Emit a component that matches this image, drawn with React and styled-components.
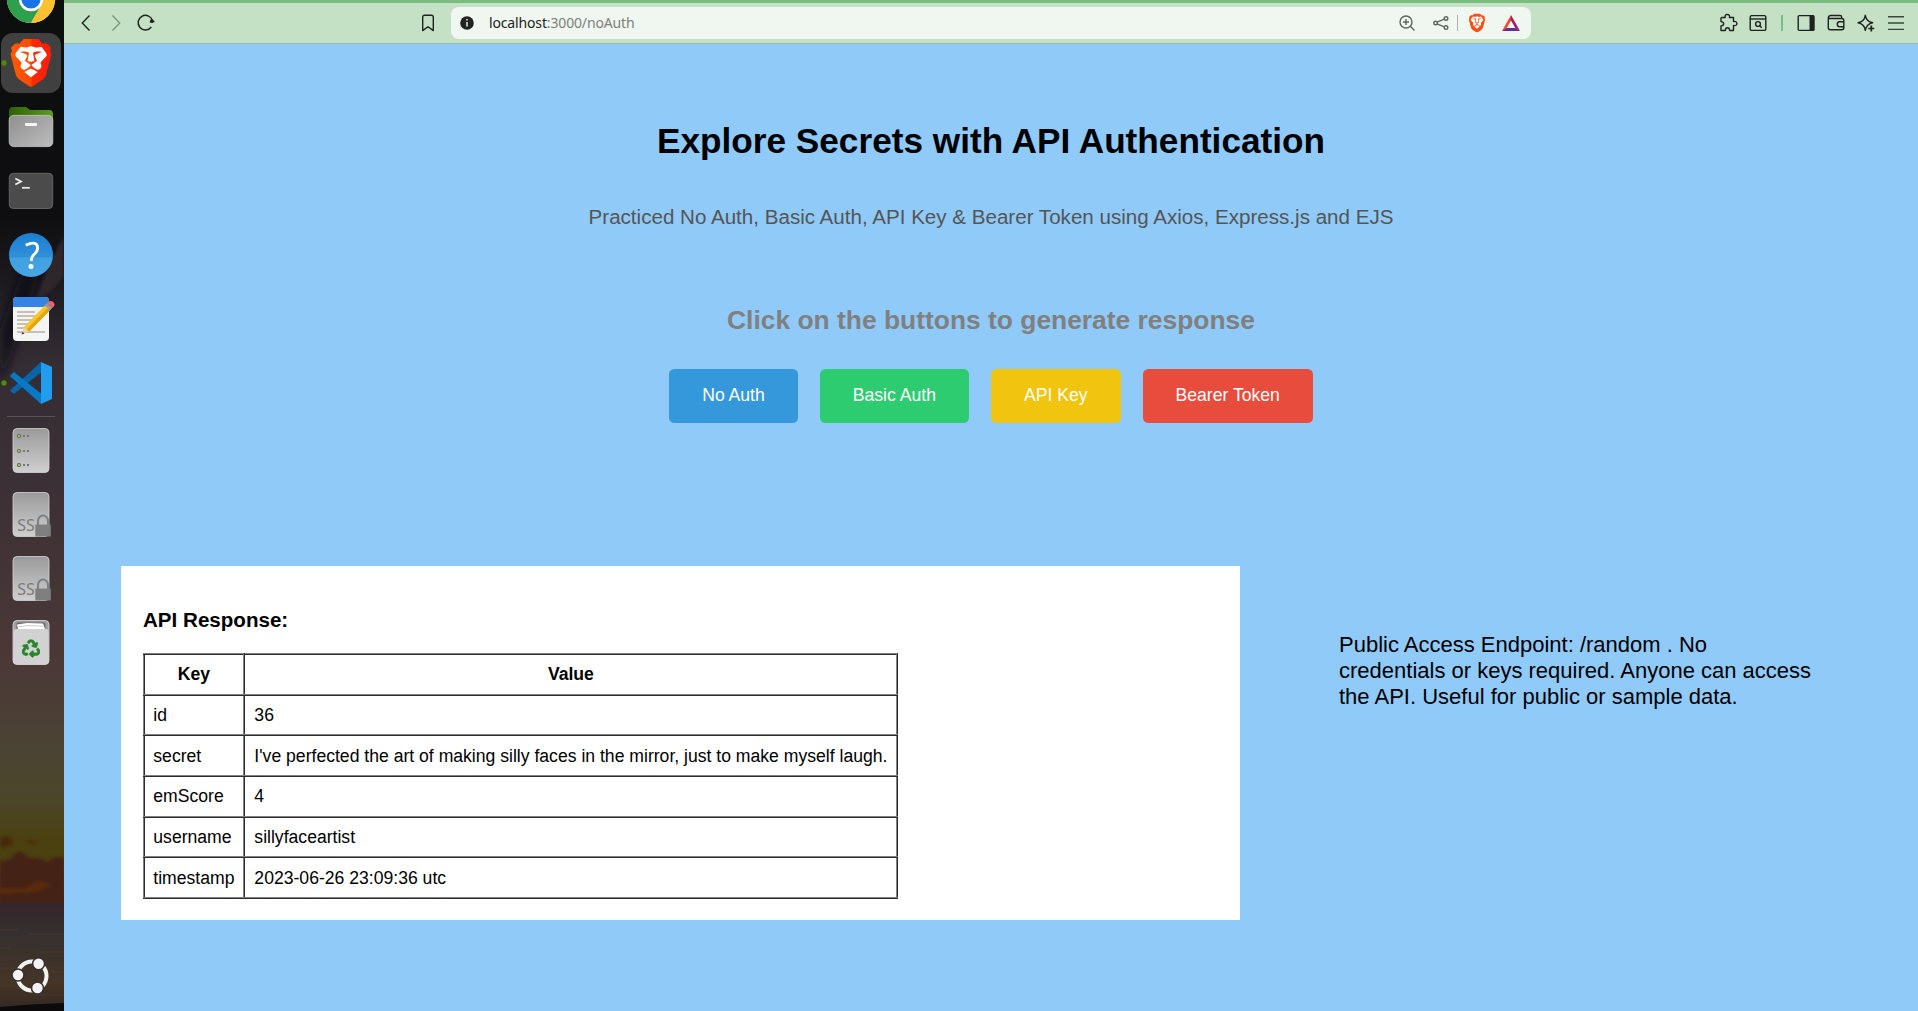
import React from "react";
import styled, { createGlobalStyle } from "styled-components";
import { SiBrave } from "react-icons/si";
import { FaRecycle } from "react-icons/fa";

const GlobalStyle = createGlobalStyle`
  * { box-sizing: border-box; }
  body {
    margin: 0;
    overflow: hidden;
    font-family: "Liberation Sans", Arial, sans-serif;
    font-size: 17.6px;
    color: #000;
  }
`;

const Desktop = styled.div`
  display: flex;
  width: 1918px;
  height: 1011px;
  overflow: hidden;
`;

/* ---------- dock ---------- */

const DockBar = styled.nav`
  display: grid;
  flex: none;
  width: 64px;
  height: 1011px;
  overflow: hidden;
  > * { grid-area: 1 / 1; }
`;

const Wallpaper = styled.svg`
  display: block;
`;

const DockItems = styled.div`
  display: flex;
  flex-direction: column;
  height: 1011px;
  margin-top: -33px;
  z-index: 1;
`;

const DockSlot = styled.div`
  flex: none;
  width: 64px;
  height: 64px;
  svg { display: block; }
`;

const DockRule = styled.hr`
  flex: none;
  width: 48px;
  height: 1px;
  margin: 1px 0 1px 7px;
  border: 0;
  background: #5a5459;
`;

const LauncherSlot = styled(DockSlot)`
  margin-top: 270px;
`;

function Slot({ children }) {
  return (
    <DockSlot>
      <svg width="64" height="64" viewBox="0 0 64 64">{children}</svg>
    </DockSlot>
  );
}

function SsdIcon() {
  return (
    <Slot>
      <rect x="13" y="10.5" width="36" height="44" rx="4" fill="url(#steel)" stroke="#d6d6d6" strokeWidth=".8" />
      <text x="17.3" y="48.5" fontFamily="Noto Sans, sans-serif" fontSize="16" fill="#7b7b7b">SS</text>
      <path d="M38 44v-5a5 5.5 0 0 1 10 0v5" fill="none" stroke="#7f7f7f" strokeWidth="2" />
      <rect x="35.3" y="42.5" width="15.5" height="12" fill="#7f7f7f" />
    </Slot>
  );
}

function Dock() {
  return (
    <DockBar>
      <Wallpaper width="64" height="1011" viewBox="0 0 64 1011">
        <defs>
          <linearGradient id="sky" x1="0" y1="0" x2="0" y2="1">
            <stop offset="0" stopColor="#0d0e0e" />
            <stop offset=".21" stopColor="#0e0e10" />
            <stop offset=".27" stopColor="#1a181d" />
            <stop offset=".36" stopColor="#342d34" />
            <stop offset=".5" stopColor="#3d3136" />
            <stop offset=".66" stopColor="#4b3937" />
            <stop offset=".74" stopColor="#4b4334" />
            <stop offset=".79" stopColor="#4b462a" />
            <stop offset=".83" stopColor="#4b4110" />
            <stop offset=".855" stopColor="#4b3f10" />
            <stop offset=".9" stopColor="#452110" />
            <stop offset="1" stopColor="#452110" />
          </linearGradient>
          <linearGradient id="sea" x1="0" y1="0" x2="0" y2="1">
            <stop offset="0" stopColor="#33262c" />
            <stop offset=".3" stopColor="#36302f" />
            <stop offset=".75" stopColor="#453526" />
            <stop offset="1" stopColor="#302724" />
          </linearGradient>
          <filter id="soft"><feGaussianBlur stdDeviation="1.5" /></filter>
          <filter id="haze"><feGaussianBlur stdDeviation="5" /></filter>
        </defs>
        <rect width="64" height="1011" fill="url(#sky)" />
        <path d="M64 255L38 275L32 300L0 385V330L30 250Z" fill="#101018" filter="url(#haze)" opacity=".8" />
        <path d="M64 236L50 262L40 290L36 300L52 290L64 276Z" fill="#2d272b" filter="url(#soft)" />
        <g filter="url(#soft)">
          <path d="M0 838Q8 833 14 842Q8 849 0 847ZM26 841Q32 839 39 844L30 844Z" fill="#472910" />
          <path d="M0 861Q10 861 14 855Q20 847 29 858Q40 857 47 862Q54 855 64 858V905H0Z" fill="#452312" />
          <path d="M0 888h26l12 -7l14 4l-16 7l-36 2Z" fill="#5a2a0d" />
        </g>
        <rect y="903" width="64" height="108" fill="url(#sea)" />
        <path d="M0 930h18M28 934h36M0 948h10M40 952h24M0 968h13M50 972h14M0 986h28M34 995h30" stroke="#514030" strokeWidth="1.5" opacity=".35" />
        <path d="M0 1007Q30 1004 64 1003V1011H0Z" fill="#0c0a0b" />
      </Wallpaper>
      <DockItems>
        <Slot>
          <circle cx="31" cy="32" r="24" fill="#fff" />
          <path d="M31 32L10.2 20A24 24 0 0 0 31 56L41.4 38Z" fill="#2e9f4b" />
          <path d="M31 56A24 24 0 0 0 51.8 20H31L41.4 38Z" fill="#fdc02f" />
          <path d="M10.2 20A24 24 0 0 1 51.8 20H31Z" fill="#e33b2e" />
          <circle cx="31" cy="32" r="12.2" fill="#fff" />
          <circle cx="31" cy="32" r="9.6" fill="#1a73e8" />
        </Slot>
        <Slot>
          <defs>
            <linearGradient id="brave" x1="0" y1="0" x2="1" y2="0">
              <stop offset="0" stopColor="#ff5b00" />
              <stop offset=".5" stopColor="#ff4a00" />
              <stop offset=".52" stopColor="#ff2a00" />
              <stop offset="1" stopColor="#ff1d0a" />
            </linearGradient>
          </defs>
          <rect x="1" y="2" width="60" height="60" rx="12" fill="#404040" />
          <circle cx="4" cy="32" r="2.7" fill="#4e8a06" />
          <path d="M17 16L31 12L46 16L48 24L40 46L31 53L22 46L14 24Z" fill="#fff" />
          <SiBrave x="7" y="8" size="48" fill="url(#brave)" />
        </Slot>
        <Slot>
          <defs>
            <linearGradient id="folder" x1="0" y1="0" x2="1" y2="1">
              <stop offset="0" stopColor="#8f8f8f" />
              <stop offset="1" stopColor="#bdbdbd" />
            </linearGradient>
            <linearGradient id="leaf" x1="0" y1="0" x2="1" y2="0">
              <stop offset="0" stopColor="#2f6100" />
              <stop offset="1" stopColor="#5e9b22" />
            </linearGradient>
          </defs>
          <path d="M9 30V16a4 4 0 0 1 4-4h13l4 3h19a4 4 0 0 1 4 4v11Z" fill="url(#leaf)" />
          <rect x="9.2" y="20.4" width="43.6" height="31.2" rx="4.5" fill="url(#folder)" stroke="#c9c9c9" strokeWidth=".8" />
          <rect x="25" y="28" width="12" height="3" rx="1" fill="#f5f5f5" />
        </Slot>
        <Slot>
          <rect x="9.3" y="14.3" width="43.4" height="35.2" rx="4" fill="#4b4b4b" stroke="#636363" />
          <path d="M15.3 19.5L21 22.5L15.3 25.5" fill="none" stroke="#eee" strokeWidth="1.8" />
          <path d="M22 28.8h7.8" stroke="#eee" strokeWidth="1.7" />
        </Slot>
        <Slot>
          <defs>
            <linearGradient id="help" x1="0" y1="0" x2="0" y2="1">
              <stop offset="0" stopColor="#1b7fd1" />
              <stop offset=".55" stopColor="#2f90da" />
              <stop offset=".56" stopColor="#419fdf" />
              <stop offset="1" stopColor="#45a7e6" />
            </linearGradient>
          </defs>
          <circle cx="31" cy="32" r="22" fill="url(#help)" />
          <path d="M25.7 22.2Q37.500 17 37.600 25Q37.500 28.500 34 31.500Q31.300 33.800 31.300 38" fill="none" stroke="#fff" strokeWidth="2.9" />
          <circle cx="31" cy="43.5" r="2.5" fill="#fff" />
        </Slot>
        <Slot>
          <rect x="13" y="10" width="36" height="44" rx="4" fill="#f4f4f2" />
          <path d="M13 20v-6a4 4 0 0 1 4-4h28a4 4 0 0 1 4 4v6Z" fill="#3584e4" />
          <path d="M17 25h18M17 29h20M17 33h17M17 37h15M17 41h11M17 45h28" stroke="#c5c1b5" strokeWidth="1.8" />
          <path d="M21.5 47.5L24 40L29 44Z" fill="#eed3a8" />
          <path d="M21.5 47.5L22.5 44.7L24.5 46.5Z" fill="#333" />
          <path d="M24 40L44.7 18.5L50 23.3L29.3 44.6Z" fill="#f7c52f" />
          <path d="M26.8 42.3L47.4 21L50 23.3L29.3 44.6Z" fill="#e5a50a" />
          <path d="M44.7 18.5L47 16L52.5 20.8L50 23.3Z" fill="#9a9996" />
          <path d="M47 16Q50 12.4 53.6 15.5Q56 18 52.5 20.8Z" fill="#f06368" />
        </Slot>
        <Slot>
          <circle cx="4" cy="32" r="2.7" fill="#4e8a06" />
          <path d="M9.8 39.5L13.8 43L41 21.5V11Z" fill="#0865a9" />
          <path d="M9.8 25L13.8 21L41 42.5V53Z" fill="#0879c7" />
          <path d="M41 11L52 16V48L41 53Z" fill="#229cee" />
        </Slot>
        <DockRule />
        <Slot>
          <defs>
            <linearGradient id="steel" x1="0" y1="0" x2="0" y2="1">
              <stop offset="0" stopColor="#9a9a9a" />
              <stop offset="1" stopColor="#cfcfcf" />
            </linearGradient>
          </defs>
          <rect x="13" y="10.5" width="36" height="44" rx="4" fill="url(#steel)" stroke="#d6d6d6" strokeWidth=".8" />
          {[18, 33, 47].map((y) => (
            <g key={y}>
              <circle cx="19" cy={y} r="1.7" fill="#9fbe52" stroke="#6a7064" />
              <path d={`M23 ${y}h2M27 ${y}h2`} stroke="#777" strokeWidth="2" />
            </g>
          ))}
        </Slot>
        <SsdIcon />
        <SsdIcon />
        <Slot>
          <rect x="13" y="10.5" width="36" height="44" rx="4" fill="url(#steel)" stroke="#dedede" strokeWidth=".8" />
          <rect x="13.5" y="19" width="35" height="35" rx="3" fill="#d2d2d2" />
          <path d="M16.5 19V14q0-1.5 1.5-1.5h26q1.5 0 1.5 1.5V19Z" fill="#6d6d6d" />
          <path d="M18 19l-1-4.5l10-1.5l16 .5l2 5.5Z" fill="#fff" />
          <path d="M18 17l10-1.5l15 .7" stroke="#aaa" strokeWidth=".6" fill="none" />
          <FaRecycle x="22" y="29.5" size="18" fill="#26862b" stroke="#26862b" strokeWidth="26" />
        </Slot>
        <LauncherSlot>
          <svg width="64" height="64" viewBox="0 0 64 64">
            <circle cx="32" cy="32" r="14.5" fill="none" stroke="#f3f3f3" strokeWidth="4" />
            <g fill="#f3f3f3" stroke="#37302f" strokeWidth="1.6">
              <circle cx="18" cy="31" r="6" />
              <circle cx="38.6" cy="19.7" r="6" />
              <circle cx="37.5" cy="44" r="6" />
            </g>
          </svg>
        </LauncherSlot>
      </DockItems>
    </DockBar>
  );
}

/* ---------- browser chrome ---------- */

const Window = styled.div`
  display: flex;
  flex-direction: column;
  flex: 1;
  min-width: 0;
`;

const Toolbar = styled.header`
  display: flex;
  align-items: center;
  flex: none;
  height: 44px;
  border-top: 3px solid #7abd7e;
  border-bottom: 1px solid #96bea3;
  background: #c5e1c5;
`;

const AddressBar = styled.div`
  display: flex;
  align-items: center;
  width: 1080px;
  height: 32px;
  margin-left: 13px;
  padding: 0 10px 0 6px;
  border-radius: 8px;
  background: #f0f7f0;
`;

const Url = styled.span`
  flex: 1;
  margin-left: 12px;
  font-family: "Noto Sans", sans-serif;
  font-size: 14px;
  line-height: 20px;
  letter-spacing: -0.15px;
  color: #7c817c;
`;

const Host = styled.span`
  color: #202320;
`;

const ToolIcon = styled.svg`
  flex: none;
  width: 20px;
  height: 20px;
  margin-left: ${(p) => p.$gap}px;
  fill: none;
  stroke: ${(p) => p.$color || "#1f2320"};
  stroke-width: 1.4;
`;

const Divider = styled.i`
  width: ${(p) => p.$width}px;
  height: 16px;
  margin-left: ${(p) => p.$gap}px;
  background: ${(p) => p.$color};
`;

function BrowserBar() {
  return (
    <Toolbar>
      <ToolIcon $gap={12}><path d="M13.5 2.5L6.3 10L13.5 17.5" /></ToolIcon>
      <ToolIcon $gap={10} $color="#819481"><path d="M6.5 2.5L13.7 10L6.5 17.5" /></ToolIcon>
      <ToolIcon $gap={10}>
        <path d="M15.3 14A7.3 7.3 0 1 1 16.4 7.5" strokeWidth="1.5" />
        <circle cx="15.8" cy="8.2" r="1.9" fill="#1f2320" stroke="none" />
        <path d="M14 8.5h4.5" strokeWidth="1.5" />
      </ToolIcon>
      <ToolIcon $gap={262}>
        <path d="M4.7 17.6V4.2q0-2 2-2h6.6q2 0 2 2V17.6L10 13.7Z" strokeLinejoin="round" />
      </ToolIcon>
      <AddressBar>
        <ToolIcon $gap={0}>
          <circle cx="10" cy="10" r="6.8" fill="#202320" stroke="none" />
          <path d="M10 9v4.5M10 6v1.6" stroke="#e4ebe4" strokeWidth="1.5" />
        </ToolIcon>
        <Url><Host>localhost</Host>:3000/noAuth</Url>
        <ToolIcon $gap={0} $color="#5f6660">
          <circle cx="9" cy="9" r="6" />
          <path d="M13.3 13.3L17.5 17.5M9 6v6M6 9h6" />
        </ToolIcon>
        <ToolIcon $gap={14} $color="#5f6660">
          <path d="M6 9.2L13.3 6.2M6 10.8L13.3 13.8" />
          <circle cx="4.6" cy="10" r="1.8" />
          <circle cx="15" cy="5.5" r="1.8" />
          <circle cx="15" cy="14.6" r="1.8" />
        </ToolIcon>
        <Divider $gap={6} $width={1} $color="#a7b4a7" />
        <ToolIcon $gap={9}>
          <path d="M5 5L10 3L15 5L14 14L10 17L6 14Z" fill="#fff" stroke="none" />
          <SiBrave x="0.5" y="0.5" size="19" fill="#fb4f12" stroke="none" />
        </ToolIcon>
        <ToolIcon $gap={14}>
          <g stroke="none">
            <path d="M10 2L1 18L5.5 15.3L10 7.5Z" fill="#ff4724" />
            <path d="M10 2L19 18L14.5 15.3L10 7.5Z" fill="#9e1f63" />
            <path d="M1 18H19L14.5 15H5.5Z" fill="#662d91" />
          </g>
        </ToolIcon>
      </AddressBar>
      <ToolIcon $gap={187}>
        <path strokeLinejoin="round" d="M4 4.5H7.2Q6.7 1.5 9.3 1.4Q12 1.5 11.5 4.5H15.5V8.5Q18.8 8 18.9 10.5Q18.8 13 15.5 12.5V17.5H11.7Q11.5 14.8 9.5 14.8Q7.5 14.8 7.3 17.5H3V13Q5.7 12.7 5.7 10.8Q5.7 8.9 3 8.6V5.5Q3 4.5 4 4.5Z" />
      </ToolIcon>
      <ToolIcon $gap={10}>
        <rect x="2.2" y="2.6" width="15.6" height="14.8" rx="1.5" />
        <path d="M2 6h16" />
        <circle cx="10" cy="11" r="2.4" />
        <path d="M11.8 12.7L13.7 14.7" />
      </ToolIcon>
      <Divider $gap={13} $width={2} $color="#7abd7e" />
      <ToolIcon $gap={13}>
        <rect x="2.2" y="2.6" width="15.8" height="14.8" rx="1" />
        <path d="M13.5 2.5H18v15h-4.5Z" fill="#1f2320" stroke="none" />
      </ToolIcon>
      <ToolIcon $gap={10}>
        <path d="M2.3 5.5V14.8q0 2 2 2h11.5q2 0 2-2V7.5q0-2-2-2H2.3ZM2.3 5.5q0-3 2.5-3H14q1.7 0 1.7 1.7V5.5" />
        <path d="M18 8.7h-4.5q-2.2 0-2.2 2.5t2.2 2.5H18" />
      </ToolIcon>
      <ToolIcon $gap={10}>
        <path strokeLinejoin="round" d="M9.3 2.3Q10.5 8.7 16.7 9.7Q10.5 10.8 9.3 17.3Q8.3 10.8 2 9.7Q8.3 8.7 9.3 2.3Z" />
        <path d="M15.3 12.5v6M12.3 15.5h6" strokeWidth="1.7" />
      </ToolIcon>
      <ToolIcon $gap={10} $color="#3c443c"><path d="M2 3.7h16M2 10h16M2 16.4h16" /></ToolIcon>
    </Toolbar>
  );
}

/* ---------- page ---------- */

const Page = styled.main`
  flex: 1;
  background: #90caf9;
`;

const Hero = styled.section`
  display: flex;
  flex-direction: column;
  align-items: center;
  height: 522px;
  padding-top: 77px;
`;

const Title = styled.h1`
  margin: 0;
  font-size: 35.2px;
  line-height: 40px;
`;

const Subtitle = styled.p`
  margin: 44px 0 0;
  font-size: 20.59px;
  line-height: 24px;
  color: #555;
`;

const Prompt = styled.h2`
  margin: 76px 0 0;
  font-size: 26.4px;
  line-height: 30px;
  color: #808080;
`;

const ButtonRow = styled.div`
  display: flex;
  gap: 22px;
  margin-top: 34px;
`;

const AuthButton = styled.button`
  height: 54px;
  padding: 0 33px 2px;
  border: 0;
  border-radius: 5.5px;
  background: ${(p) => p.$color};
  color: #fff;
  font: inherit;
`;

const Results = styled.section`
  display: flex;
  align-items: flex-start;
  padding-left: 57px;
`;

const ResponseCard = styled.article`
  width: 1119px;
  height: 354px;
  padding: 42px 22px 0;
  background: #fff;
`;

const CardTitle = styled.h3`
  margin: 0 0 21px;
  font-size: 20.59px;
  line-height: 24px;
`;

const Table = styled.table`
  border: 2px ridge gray;
  border-collapse: collapse;
  line-height: 20px;
  th, td {
    height: 40.7px;
    padding: 8.8px;
    border: 2px ridge gray;
    white-space: nowrap;
  }
  th:first-child, td:first-child { padding-left: 8.3px; padding-right: 8.5px; }
  th:last-child, td:last-child { padding-left: 9.4px; }
  td { text-align: left; }
`;

const Note = styled.p`
  width: 475px;
  margin: 66px 0 0 99px;
  font-size: 22px;
  line-height: 26px;
`;

const buttons = [
  ["No Auth", "#3498db"],
  ["Basic Auth", "#2ecc71"],
  ["API Key", "#f1c40f"],
  ["Bearer Token", "#e74c3c"],
];

const response = [
  ["id", "36"],
  ["secret", "I've perfected the art of making silly faces in the mirror, just to make myself laugh."],
  ["emScore", "4"],
  ["username", "sillyfaceartist"],
  ["timestamp", "2023-06-26 23:09:36 utc"],
];

export default function App() {
  return (
    <Desktop>
      <GlobalStyle />
      <Dock />
      <Window>
        <BrowserBar />
        <Page>
          <Hero>
            <Title>Explore Secrets with API Authentication</Title>
            <Subtitle>Practiced No Auth, Basic Auth, API Key &amp; Bearer Token using Axios, Express.js and EJS</Subtitle>
            <Prompt>Click on the buttons to generate response</Prompt>
            <ButtonRow>
              {buttons.map(([label, color]) => (
                <AuthButton key={label} $color={color}>{label}</AuthButton>
              ))}
            </ButtonRow>
          </Hero>
          <Results>
            <ResponseCard>
              <CardTitle>API Response:</CardTitle>
              <Table>
                <thead>
                  <tr><th>Key</th><th>Value</th></tr>
                </thead>
                <tbody>
                  {response.map(([key, value]) => (
                    <tr key={key}><td>{key}</td><td>{value}</td></tr>
                  ))}
                </tbody>
              </Table>
            </ResponseCard>
            <Note>
              Public Access Endpoint: /random . No credentials or keys required. Anyone can access the API. Useful for public or sample data.
            </Note>
          </Results>
        </Page>
      </Window>
    </Desktop>
  );
}
